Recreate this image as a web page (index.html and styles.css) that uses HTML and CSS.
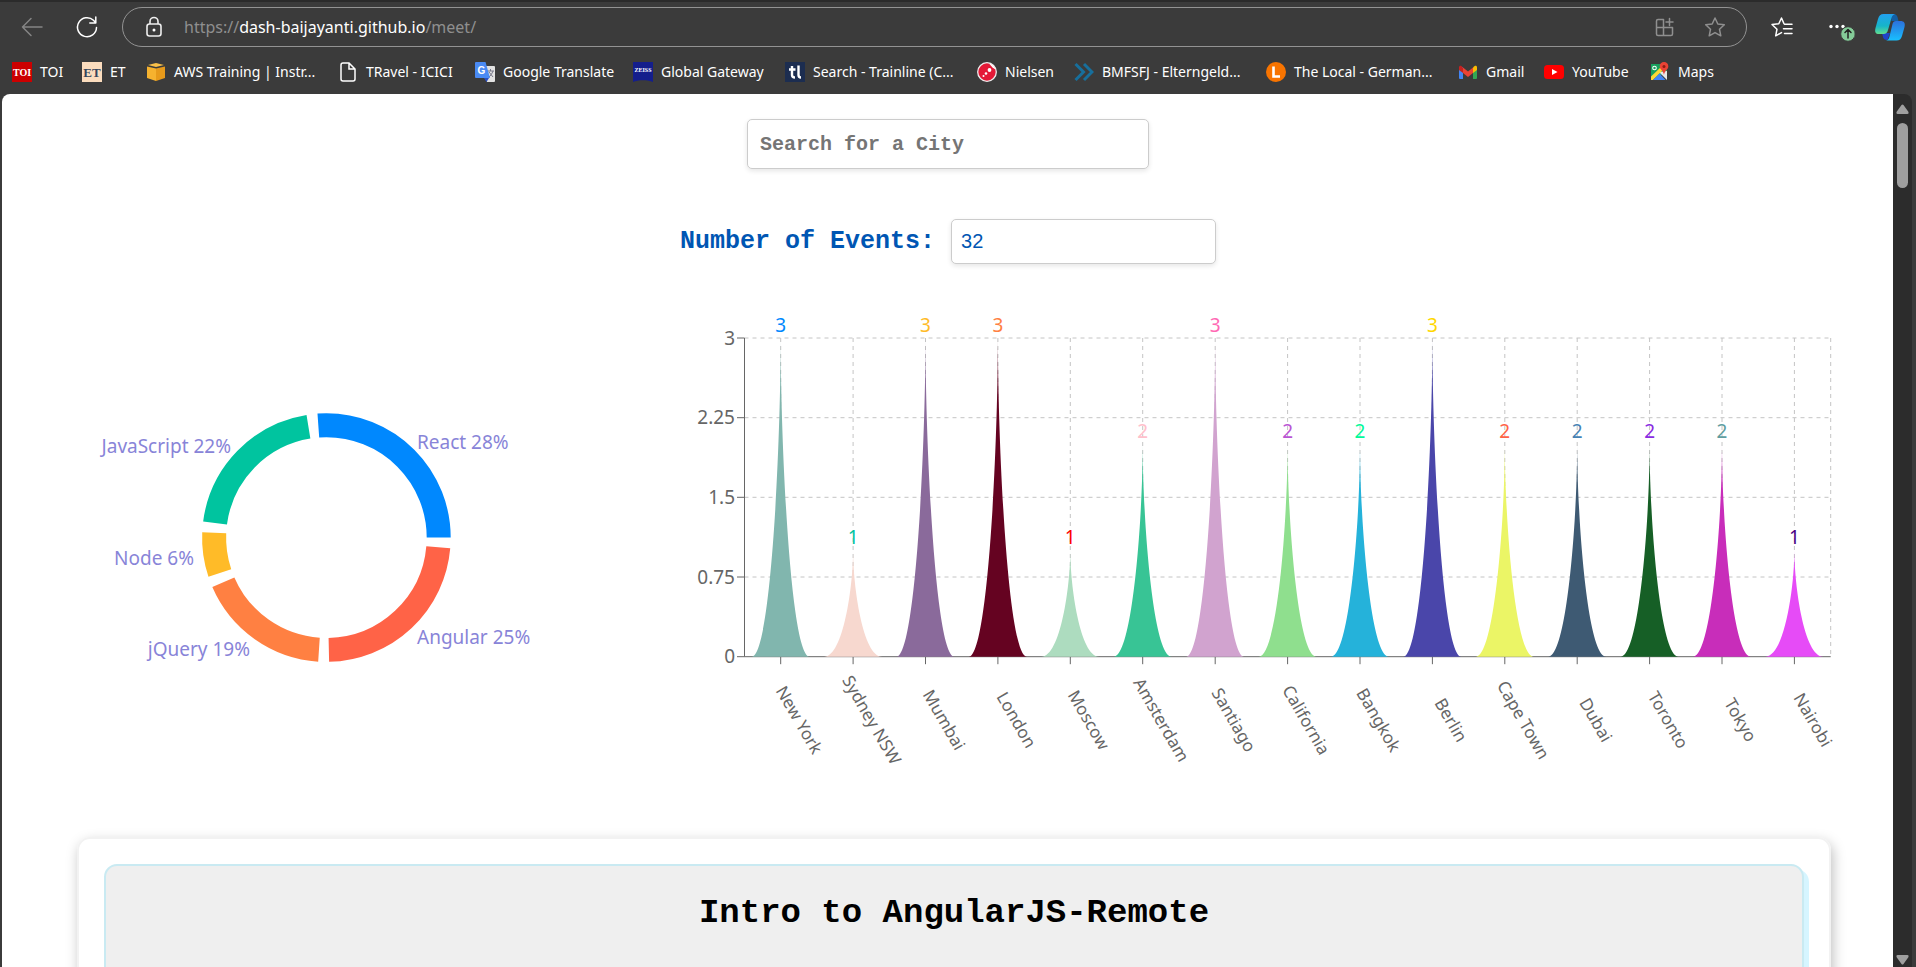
FILE: index.html
```html
<!DOCTYPE html>
<html lang="en">
<head>
<meta charset="utf-8">
<title>Meet</title>
<link rel="stylesheet" href="styles.css">
</head>
<body>
<header class="browser">
  <div class="toolbar">
    <button class="tool tool-back" aria-label="Back"><svg width="24" height="24" viewBox="0 0 24 24"><path d="M22 12H2.500M11 3.500 2.500 12l8.500 8.500"/></svg></button>
    <button class="tool tool-reload" aria-label="Reload"><svg width="24" height="24" viewBox="0 0 24 24"><path d="M21.500 12.500A9.500 9.500 0 1 1 18.500 5.300L20.500 7.500M20.800 2v6h-6"/></svg></button>
    <div class="address">
      <svg class="lock" width="20" height="24" viewBox="0 0 20 24"><rect x="3" y="9" width="14" height="12" rx="2.500"/><path d="M6 9V6.500a4 4 0 0 1 8 0V9"/><circle class="dot" cx="10" cy="15" r="1.500"/></svg>
      <div class="url">https://<b class="host">dash-baijayanti.github.io</b>/meet/</div>
      <button class="tool tool-dim" aria-label="Apps"><svg width="22" height="24" viewBox="0 0 22 24"><path d="M9.500 4.500H4a1.500 1.500 0 0 0-1.500 1.500v13A1.500 1.500 0 0 0 4 20.500h13a1.500 1.500 0 0 0 1.500-1.500v-6.500h-16M9.500 4.500v16M15.500 3.500v7M12 7h7"/></svg></button>
      <button class="tool tool-dim tool-star" aria-label="Add to favorites"><svg width="22" height="24" viewBox="0 0 22 24"><path d="m11 3 2.800 6 6.500.800-4.800 4.500 1.300 6.500L11 17.600l-5.800 3.200 1.300-6.500L1.700 9.800 8.200 9z"/></svg></button>
    </div>
    <button class="tool tool-favs" aria-label="Favorites"><svg width="24" height="24" viewBox="0 0 24 24"><path d="M14 8.700 11.500 3 8.800 8.700 2 9.500l5 4.700-1.300 6.600 5.800-3.200M14.500 9.300H22M13.500 13.700H22M14.500 18.500H22"/></svg></button>
    <button class="tool tool-menu" aria-label="Menu"><svg width="30" height="32" viewBox="0 0 30 32"><g class="dot"><circle cx="4" cy="15.500" r="1.700"/><circle cx="10" cy="15.500" r="1.700"/><circle cx="16" cy="15.500" r="1.700"/></g><circle class="update" cx="21" cy="23" r="7.300"/><path class="up" d="M21 27v-8M18 21.500l3-3 3 3"/></svg></button>
    <button class="tool tool-copilot" aria-label="Copilot"><svg width="32" height="32" viewBox="0 0 32 32">
      <defs><linearGradient id="cpa" x1="0" y1="0" x2="0" y2="1"><stop offset="0" stop-color="#22a0f0"/><stop offset=".6" stop-color="#16b5c9"/><stop offset="1" stop-color="#62dd8e"/></linearGradient><linearGradient id="cpb" x1="0" y1="0" x2="0" y2="1"><stop offset="0" stop-color="#2c70dc"/><stop offset="1" stop-color="#18c0ff"/></linearGradient></defs>
      <path fill="#135fa4" d="M17 3h2.500c2.500 0 3.500 1.500 4 3l1 4h-7z"/><path fill="#2043c8" d="M8 22h8l-2.500 7C10.500 29 9.500 28 9 26z"/>
      <path fill="url(#cpa)" d="M9.500 3H21c-2.500.500-3 2.500-3.500 4L14 19c-.700 2.500-2 4-4.500 4H5c-3.500 0-4.500-2-3.500-6L4 8c1-3.500 2.500-5 5.500-5z"/>
      <path fill="url(#cpb)" d="M22 10h4.500c3.500 0 5 2 4 6L28 25c-1 3-2.500 4.500-5.500 4.500H12c2.500-.500 3-2.500 3.500-4L18.500 13c.500-2 1.500-3 3.500-3z"/></svg></button>
  </div>
  <nav class="bookmarks" aria-label="Bookmarks">
    <a class="mark" href="#"><svg class="ico" viewBox="0 0 20 20"><path fill="#c00" d="M0 0h20v20H0z"/><text class="ico-serif" x="10" y="14" font-size="10" fill="#fff">TOI</text></svg>TOI</a>
    <a class="mark" href="#"><svg class="ico" viewBox="0 0 20 20"><path fill="#fbdcbd" d="M0 0h20v20H0z"/><text class="ico-serif" x="10" y="15" font-size="13" fill="#36465c">ET</text></svg>ET</a>
    <a class="mark" href="#"><svg class="ico" viewBox="0 0 20 20"><path fill="#f6b22f" d="M1 4.500 10 6.500v12.500L1 16z"/><path fill="#e79a1b" d="m19 4.500-9 2v12.500l9-3z"/><path fill="#f9c04a" d="m2 3 8-2 8 2-8 2z"/></svg>AWS Training | Instr...</a>
    <a class="mark" href="#"><svg class="ico" viewBox="0 0 20 20"><path fill="none" stroke="#fff" stroke-width="1.500" d="M11 1H5a2 2 0 0 0-2 2v14a2 2 0 0 0 2 2h10a2 2 0 0 0 2-2V7zv6h6"/></svg>TRavel - ICICI</a>
    <a class="mark" href="#"><svg class="ico" viewBox="0 0 20 20"><path fill="#e2e2e2" d="M8 4h11a1 1 0 0 1 1 1v14a1 1 0 0 1-1 1h-7z"/><path fill="none" stroke="#778" d="M12 9h7M15.500 7v2M18 9c-1 3-3 5-4 6M14 10l4 5"/><path fill="#2a4fc4" d="M9 16h5l-2.500 4z"/><path fill="#4a8af4" d="M1 0h9.500L15 16H1a1 1 0 0 1-1-1V1a1 1 0 0 1 1-1z"/><text class="ico-sans" x="6.500" y="12" font-size="10" fill="#fff">G</text></svg>Google Translate</a>
    <a class="mark" href="#"><svg class="ico" viewBox="0 0 20 20"><path fill="#141e8c" d="M0 0h20v20c-5-2.500-15-2.500-20 0z"/><text class="ico-serif" x="10" y="10" font-size="6" fill="#fff">ZEISS</text></svg>Global Gateway</a>
    <a class="mark" href="#"><svg class="ico" viewBox="0 0 20 20"><path fill="#1c2d50" d="M0 0h20v20H0z"/><path fill="none" stroke="#fff" stroke-width="2.400" d="M7 4v9q0 2.500 3 2.500M4 7.500h6.500M13.500 3.500V13q0 2.500 2.500 2.500"/></svg>Search - Trainline (C...</a>
    <a class="mark" href="#"><svg class="ico" viewBox="0 0 20 20"><circle cx="10" cy="10" r="9.300" fill="#e41937" stroke="#eee" stroke-width="1.300"/><path fill="#fff" d="M12 1.500q5 1 6.500 6l-3-2z"/><circle cx="12.500" cy="8" r="1.900" fill="#fff"/><circle cx="9" cy="11.500" r="1.300" fill="#fff"/><circle cx="6.500" cy="14" r="1" fill="#fff"/></svg>Nielsen</a>
    <a class="mark" href="#"><svg class="ico" viewBox="0 0 20 20"><path fill="none" stroke="#176f9c" stroke-width="3" d="m1.500 2 8 8-8 8M10 2l8 8-8 8"/></svg>BMFSFJ - Elterngeld...</a>
    <a class="mark" href="#"><svg class="ico" viewBox="0 0 20 20"><circle cx="10" cy="10" r="10" fill="#f87400"/><path fill="none" stroke="#fff" stroke-width="2.600" d="M7.500 4.500v10h6.500"/></svg>The Local - German...</a>
    <a class="mark" href="#"><svg class="ico" viewBox="0 0 20 20"><path fill="#4285f4" d="M1 5h4v12H2a1 1 0 0 1-1-1z"/><path fill="#34a853" d="M15 7h4v9a1 1 0 0 1-1 1h-3z"/><path fill="#fbbc04" d="M15 5.500C17 3 19 3.500 19 5.500V8l-4 3z"/><path fill="#c5221f" d="M1 5.500C1 3.500 3 3 5 5.500V11L1 8z"/><path fill="#ea4335" d="m5 5.500 5 4 5-4V11l-5 4-5-4z"/></svg>Gmail</a>
    <a class="mark" href="#"><svg class="ico" viewBox="0 0 20 20"><rect y="3" width="20" height="14" rx="3.500" fill="#f00"/><path fill="#fff" d="m8 7 5.500 3L8 13z"/></svg>YouTube</a>
    <a class="mark" href="#"><svg class="ico" viewBox="0 0 20 20"><path fill="#17a05d" d="M1 2h16v8L1 18z"/><path fill="#e8e8e8" d="m9 10 8-1v9z"/><path fill="#fdd835" d="M1 14.500 11 5l2 3L3 18H1z"/><path fill="#4285f4" d="m9.500 11.500 6 6.500H3z"/><path fill="#ea4335" d="M14 0a4.300 4.300 0 0 1 4.300 4.500c0 3-3.800 4-4.300 8.500-.500-4.500-4.300-5.500-4.300-8.500A4.300 4.300 0 0 1 14 0z"/><circle cx="14" cy="4.500" r="1.500" fill="#8b1d13"/><circle cx="4.500" cy="6" r="1.800" fill="none" stroke="#fff" stroke-width="1.100"/></svg>Maps</a>
  </nav>
</header>
<div class="viewport">
  <main class="page">
    <form class="controls">
      <input class="field city" type="text" placeholder="Search for a City" aria-label="Search for a City">
      <div class="count">
        <label class="count-label" for="count">Number of Events:</label>
        <input class="field number" id="count" type="text" value="32">
      </div>
    </form>
    <section class="charts">
      <svg class="pie" viewBox="77 300 580 500" role="img" aria-label="Genres of events">
        <g class="ring" transform="translate(326.400 538.600) scale(1 -1)">
          <circle r="112.300" pathLength="360" stroke="#0088fe" stroke-dasharray="94.200 360"/>
          <circle r="112.300" pathLength="360" stroke="#00c49f" stroke-dasharray="73.300 360" transform="rotate(99.200)"/>
          <circle r="112.300" pathLength="360" stroke="#ffbb28" stroke-dasharray="20.900 360" transform="rotate(177.500)"/>
          <circle r="112.300" pathLength="360" stroke="#ff8042" stroke-dasharray="62.800 360" transform="rotate(203.400)"/>
          <circle r="112.300" pathLength="360" stroke="#ff6347" stroke-dasharray="83.750 360" transform="rotate(271.250)"/>
        </g>
        <g class="genre">
          <text x="417" y="450">React 28%</text>
          <text x="417" y="645">Angular 25%</text>
          <text class="end" x="231" y="454">JavaScript 22%</text>
          <text class="end" x="194" y="566">Node 6%</text>
          <text class="end" x="250" y="657">jQuery 19%</text>
        </g>
      </svg>
      <svg class="bars" viewBox="657 300 1174 500" role="img" aria-label="Events per city">
        <defs>
          <path id="s1" d="M-29 0C-9.700 0 0-70.800 0-106.200 0-70.800 9.700 0 29 0z"/>
          <path id="s2" d="M-29 0C-9.700 0 0-141.600 0-212.400 0-141.600 9.700 0 29 0z"/>
          <path id="s3" d="M-29 0C-9.700 0 0-212.400 0-318.700 0-212.400 9.700 0 29 0z"/>
        </defs>
        <path class="grid" d="M744.500 339H1830.700M744.500 418.700H1830.700M744.500 498.300H1830.700M744.500 578H1830.700M1830.700 339V657.700M780.700 339V657.700M853.100 339V657.700M925.500 339V657.700M997.900 339V657.700M1070.300 339V657.700M1142.700 339V657.700M1215.200 339V657.700M1287.600 339V657.700M1360 339V657.700M1432.400 339V657.700M1504.800 339V657.700M1577.200 339V657.700M1649.600 339V657.700M1722 339V657.700M1794.400 339V657.700"/>
        <path class="axis" d="M744.500 339V657.700H1830.700M737 339h7.500M737 418.700h7.500M737 498.300h7.500M737 578h7.500M737 657.700h7.500M780.700 657.700v7.500M853.100 657.700v7.500M925.500 657.700v7.500M997.900 657.700v7.500M1070.300 657.700v7.500M1142.700 657.700v7.500M1215.200 657.700v7.500M1287.600 657.700v7.500M1360 657.700v7.500M1432.400 657.700v7.500M1504.800 657.700v7.500M1577.200 657.700v7.500M1649.600 657.700v7.500M1722 657.700v7.500M1794.400 657.700v7.500"/>
        <g class="ticks"><text x="735" y="346">3</text><text x="735" y="425">2.25</text><text x="735" y="505">1.5</text><text x="735" y="585">0.75</text><text x="735" y="664">0</text></g>
        <g transform="translate(780.700 657.700)"><use href="#s3" fill="#81b6ae"/><text class="val" y="-325" fill="#0088fe">3</text><text class="city-name" transform="translate(19 63) rotate(60)">New York</text></g>
        <g transform="translate(853.100 657.700)"><use href="#s1" fill="#f7d8cf"/><text class="val" y="-113" fill="#00c49f">1</text><text class="city-name" transform="translate(19 63) rotate(60)">Sydney NSW</text></g>
        <g transform="translate(925.500 657.700)"><use href="#s3" fill="#8a6a9b"/><text class="val" y="-325" fill="#ffbb28">3</text><text class="city-name" transform="translate(19 63) rotate(60)">Mumbai</text></g>
        <g transform="translate(997.900 657.700)"><use href="#s3" fill="#650321"/><text class="val" y="-325" fill="#ff8042">3</text><text class="city-name" transform="translate(19 63) rotate(60)">London</text></g>
        <g transform="translate(1070.300 657.700)"><use href="#s1" fill="#addcbf"/><text class="val" y="-113" fill="#ff0000">1</text><text class="city-name" transform="translate(19 63) rotate(60)">Moscow</text></g>
        <g transform="translate(1142.700 657.700)"><use href="#s2" fill="#38c495"/><text class="val" y="-219" fill="#ffc0cb">2</text><text class="city-name" transform="translate(19 63) rotate(60)">Amsterdam</text></g>
        <g transform="translate(1215.200 657.700)"><use href="#s3" fill="#d1a3cf"/><text class="val" y="-325" fill="#ff69b4">3</text><text class="city-name" transform="translate(19 63) rotate(60)">Santiago</text></g>
        <g transform="translate(1287.600 657.700)"><use href="#s2" fill="#8fdf8e"/><text class="val" y="-219" fill="#ba55d3">2</text><text class="city-name" transform="translate(19 63) rotate(60)">California</text></g>
        <g transform="translate(1360 657.700)"><use href="#s2" fill="#25b2da"/><text class="val" y="-219" fill="#00fa9a">2</text><text class="city-name" transform="translate(19 63) rotate(60)">Bangkok</text></g>
        <g transform="translate(1432.400 657.700)"><use href="#s3" fill="#4a46aa"/><text class="val" y="-325" fill="#ffd700">3</text><text class="city-name" transform="translate(19 63) rotate(60)">Berlin</text></g>
        <g transform="translate(1504.800 657.700)"><use href="#s2" fill="#ebf566"/><text class="val" y="-219" fill="#ff6347">2</text><text class="city-name" transform="translate(19 63) rotate(60)">Cape Town</text></g>
        <g transform="translate(1577.200 657.700)"><use href="#s2" fill="#3e5a73"/><text class="val" y="-219" fill="#4682b4">2</text><text class="city-name" transform="translate(19 63) rotate(60)">Dubai</text></g>
        <g transform="translate(1649.600 657.700)"><use href="#s2" fill="#165f26"/><text class="val" y="-219" fill="#8a2be2">2</text><text class="city-name" transform="translate(19 63) rotate(60)">Toronto</text></g>
        <g transform="translate(1722 657.700)"><use href="#s2" fill="#c82dba"/><text class="val" y="-219" fill="#5f9ea0">2</text><text class="city-name" transform="translate(19 63) rotate(60)">Tokyo</text></g>
        <g transform="translate(1794.400 657.700)"><use href="#s1" fill="#e64bf7"/><text class="val" y="-113" fill="#4b0082">1</text><text class="city-name" transform="translate(19 63) rotate(60)">Nairobi</text></g>
      </svg>
    </section>
    <section class="events">
      <article class="event"><h2 class="event-title">Intro to AngularJS-Remote</h2></article>
    </section>
  </main>
  <div class="scrollbar" aria-hidden="true">
    <svg width="13" height="10" viewBox="0 0 13 10"><path d="M5.500 1Q6.500 0 7.500 1L12.500 8Q13 10 11.500 10H1.500Q0 10 .5 8z"/></svg>
    <div class="track"><div class="thumb"></div></div>
    <svg width="13" height="10" viewBox="0 0 13 10"><path d="M5.500 9Q6.500 10 7.500 9L12.500 2Q13 0 11.500 0H1.500Q0 0 .5 2z"/></svg>
  </div>
</div>
</body>
</html>
```
FILE: styles.css
```css
* { box-sizing: border-box; }
body {
  margin: 0;
  height: 100vh;
  display: flex;
  flex-direction: column;
  overflow: hidden;
  background: #3b3b3b;
  font-family: "Noto Sans", "Open Sans", sans-serif;
}

/* browser bars */
.browser { flex: none; border-top: 2px solid #2b2b2b; color: #fff; }
.toolbar { display: flex; align-items: center; padding: 5px 10px 0 20px; }
.tool {
  display: flex;
  flex: none;
  padding: 0;
  border: 0;
  background: none;
  fill: none;
  stroke: #fff;
  stroke-width: 1.500px;
  stroke-linejoin: round;
  stroke-linecap: round;
}
.tool-back { stroke: #858585; margin-right: 31px; }
.tool-reload { margin-right: 23px; }
.tool-dim { stroke: #8f8f8f; }
.tool-star { margin-left: 28px; }
.tool-favs { margin-left: 23px; }
.tool-menu { margin: 0 17px 0 33px; }
.dot { fill: #fff; stroke: none; }
.update { fill: #84cc98; stroke: #3b3b3b; stroke-width: 1px; }
.up { stroke: #222; }
.tool-copilot { stroke: none; }
.address {
  flex: 1;
  display: flex;
  align-items: center;
  height: 40px;
  padding: 0 20px 0 21px;
  border: 1px solid #939393;
  border-radius: 20px;
}
.lock { fill: none; stroke: #eee; stroke-width: 1.600px; margin-right: 20px; }
.url { flex: 1; font-size: 16px; line-height: 24px; color: #8f8f8f; }
.host { font-weight: 400; color: #fff; }
.bookmarks {
  display: grid;
  grid-template-columns: 70px 64px 192px 137px 158px 152px 192px 97px 192px 192px 86px 106px auto;
  align-items: center;
  height: 47px;
  padding: 2px 12px 0;
}
.mark {
  display: flex;
  align-items: center;
  gap: 8px;
  color: #fff;
  font-size: 14px;
  line-height: 20px;
  text-decoration: none;
  white-space: nowrap;
}
.ico { width: 20px; height: 20px; }
.ico-serif { font-family: "Liberation Serif", serif; font-weight: 700; text-anchor: middle; }
.ico-sans { font-family: "Liberation Sans", sans-serif; font-weight: 700; text-anchor: middle; }

/* page frame */
.viewport { flex: 1; min-height: 0; display: flex; padding: 0 4px 0 2px; }
.page {
  flex: 1;
  min-width: 0;
  overflow: hidden;
  padding: 25px 62px 0 75px;
  background: #fff;
  border-top-left-radius: 8px;
}
.scrollbar {
  flex: none;
  display: flex;
  flex-direction: column;
  align-items: center;
  width: 19px;
  padding: 10px 0 2px;
  background: #2c2c2c;
  border-top-right-radius: 8px;
  fill: #9f9f9f;
}
.track { flex: 1; padding-top: 9px; }
.thumb { width: 11px; height: 65px; border-radius: 6px; background: #9f9f9f; }

/* search controls */
.controls {
  display: flex;
  flex-direction: column;
  align-items: center;
  gap: 50px;
  padding-right: 12px;
}
.field {
  border: 1px solid #ccc;
  border-radius: 5px;
  background: #fff;
  box-shadow: 0 2px 5px rgba(0, 0, 0, .1);
}
.city {
  width: 402px;
  height: 50px;
  padding: 0 12px;
  font: 700 20px "Liberation Mono", monospace;
}
.city::placeholder { color: #757575; }
.count { display: flex; align-items: center; gap: 16px; }
.count-label { font: 700 25px "Liberation Mono", monospace; color: #0056b3; }
.number {
  width: 265px;
  height: 45px;
  padding: 0 9px;
  font: 20px "Liberation Sans", sans-serif;
  color: #0056b3;
}

/* charts */
.charts { display: flex; margin-top: 35px; }
.pie { flex: 580; min-width: 0; }
.bars { flex: 1174; min-width: 0; overflow: visible; }
.ring { fill: none; stroke-width: 24px; }
.genre { font-size: 19px; fill: #8884d8; }
.end { text-anchor: end; }
.grid { fill: none; stroke: #c4c4c4; stroke-dasharray: 4 4; }
.axis { fill: none; stroke: #666; }
.ticks { font-size: 19px; fill: #666; text-anchor: end; }
.val { font-size: 19px; text-anchor: middle; }
.city-name { font-size: 17px; fill: #666; text-anchor: middle; dominant-baseline: central; }

/* event list */
.events {
  margin-top: 38px;
  padding: 25px;
  border: 2px solid #f2f2f2;
  border-radius: 13px;
  box-shadow: 2px 5px 13px rgba(0, 0, 0, .25);
}
.event {
  min-height: 250px;
  padding: 27px 20px;
  border: 2px solid #c9eaf2;
  border-radius: 13px;
  background: #efefef;
  box-shadow: 5px 5px 0 #d6f5ff;
}
.event-title {
  margin: 0;
  font: 700 34px/40px "Liberation Mono", monospace;
  text-align: center;
  color: #000;
}
```
